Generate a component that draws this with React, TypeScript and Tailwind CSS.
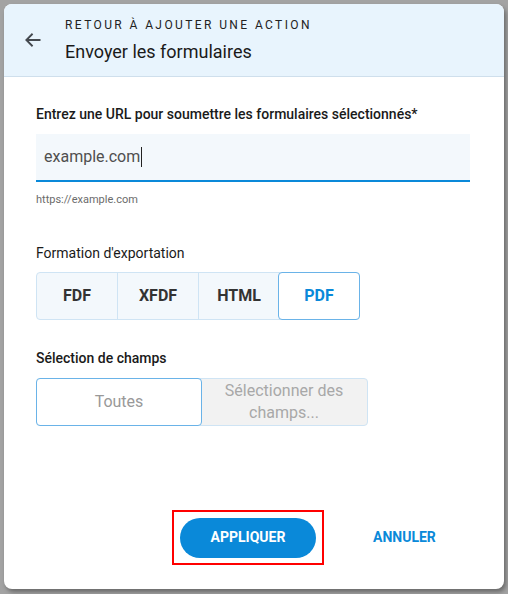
import React from "react";

export default function App() {
  return (
    <div
      className="w-[508px] h-[594px] bg-[#a3a3a3] p-[4px] pb-[5px] overflow-hidden"
      style={{ fontFamily: "Roboto, 'Liberation Sans', sans-serif" }}
    >
      <div className="w-[500px] h-[585px] bg-white rounded-[8px] overflow-hidden flex flex-col shadow-[2px_3px_4px_rgba(0,0,0,0.35)]">
        <div className="h-[73px] bg-[#e8f4fd] border-b border-[#cfdfec] flex items-start shrink-0">
          <div className="w-[57px] h-full flex items-center justify-center">
            <svg width="20" height="20" viewBox="0 0 24 24" fill="none" stroke="#454a50" strokeWidth="2.2">
              <path d="M21 12H4" />
              <path d="M11.5 4.5L4 12l7.5 7.5" strokeLinejoin="miter" />
            </svg>
          </div>
          <div className="flex flex-col pt-[14px] pl-[4px]">
            <div className="text-[12px] tracking-[2.4px] text-[#222] leading-[14px]">RETOUR À AJOUTER UNE ACTION</div>
            <div className="text-[18px] text-[#1a1a1a] leading-[22px] mt-[9px]">Envoyer les formulaires</div>
          </div>
        </div>
        <div className="flex-1 flex flex-col pl-[32px] pr-[34px]">
          <div className="text-[14px] font-medium text-[#1a1a1a] mt-[29px] leading-[16px]">
            Entrez une URL pour soumettre les formulaires sélectionnés*
          </div>
          <div className="mt-[12px] h-[48px] bg-[#f3f8fc] border-b-2 border-[#0a89d9] flex items-center px-[8px]">
            <span className="text-[16px] text-[#4f4f4f]">example.com</span>
            <span className="w-px h-[20px] bg-[#222] ml-[1px]" />
          </div>
          <div className="text-[11px] text-[#6b6b6b] mt-[11px] leading-[14px]">https://example.com</div>

          <div className="text-[14px] text-[#1a1a1a] mt-[38px] leading-[16px]">Formation d&apos;exportation</div>
          <div className="mt-[11px] flex w-[324px] h-[48px] rounded-[4px] border border-[#cfe4f4] bg-[#f3f8fc]">
            <div className="w-[81px] flex items-center justify-center border-r border-[#cfe4f4] text-[16px] font-bold text-[#333]">FDF</div>
            <div className="w-[81px] flex items-center justify-center border-r border-[#cfe4f4] text-[16px] font-bold text-[#333]">XFDF</div>
            <div className="w-[80px] flex items-center justify-center text-[16px] font-bold text-[#333]">HTML</div>
            <div className="flex-1 -m-px flex items-center justify-center rounded-[4px] border border-[#6ab3e8] bg-white text-[16px] font-bold text-[#0a89d9]">PDF</div>
          </div>

          <div className="text-[14px] font-medium text-[#1a1a1a] mt-[30px] leading-[16px]">Sélection de champs</div>
          <div className="mt-[12px] flex w-[332px] h-[48px] rounded-[4px] border border-[#cfe4f4] bg-[#f2f2f2]">
            <div className="w-[166px] -m-px flex items-center justify-center rounded-[4px] border border-[#6ab3e8] bg-white text-[16px] text-[#999]">Toutes</div>
            <div className="flex-1 flex items-center justify-center text-center text-[16px] leading-[22px] text-[#a8a8a8] px-[4px]">Sélectionner des champs...</div>
          </div>

          <div className="mt-auto mb-[24px] flex items-center">
            <div className="ml-[136px] w-[152px] h-[55px] border-2 border-[#ff0000] flex items-center justify-center">
              <div className="w-[136px] h-[40px] rounded-full bg-[#0a89d9] flex items-center justify-center text-white text-[14px] font-bold">APPLIQUER</div>
            </div>
            <div className="ml-[49px] text-[14px] font-bold text-[#0a89d9]">ANNULER</div>
          </div>
        </div>
      </div>
    </div>
  );
}
